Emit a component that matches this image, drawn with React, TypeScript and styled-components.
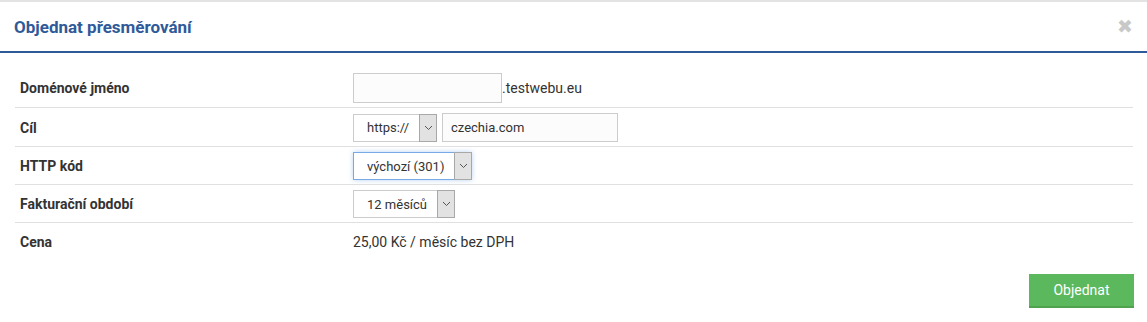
import styled, { createGlobalStyle } from 'styled-components';

const GlobalStyle = createGlobalStyle`
  body {
    margin: 0;
    background: #ffffff;
    font-family: Roboto, "Liberation Sans", Arial, sans-serif;
    color: #333333;
  }
`;

const Modal = styled.div`
  width: 1147px;
  height: 322px;
  box-sizing: border-box;
  border-top: 2px solid #e3e3e3;
  background: #fff;
`;

const Header = styled.div`
  display: flex;
  align-items: center;
  justify-content: space-between;
  height: 49px;
  padding: 0 14px;
  border-bottom: 2px solid #2f5a99;
`;

const Title = styled.h4`
  margin: 0;
  font-size: 17px;
  font-weight: 700;
  color: #2f5a99;
`;

const Close = styled.button`
  border: none;
  background: none;
  padding: 0;
  color: #c8c8c8;
  font-size: 19px;
  font-weight: 700;
  line-height: 1;
  cursor: pointer;
  font-family: "DejaVu Sans", sans-serif;
`;

const Body = styled.div`
  padding: 15px 13px 0 15px;
`;

const Table = styled.table`
  width: 1118px;
  border-collapse: collapse;
  font-size: 14px;
`;

const Row = styled.tr<{ $last?: boolean }>`
  border-bottom: ${p => (p.$last ? 'none' : '1px solid #e0e0e0')};
`;

const Label = styled.td`
  width: 323px;
  padding: 5px 5px 4px;
  font-weight: 700;
  color: #333;
  height: 28px;
`;

const Value = styled.td`
  padding: 5px 5px 4px;
  color: #333;
`;

const Inline = styled.div`
  display: flex;
  align-items: center;
  gap: 5px;
`;

const TextInput = styled.input<{ $w: number; $h: number }>`
  box-sizing: border-box;
  width: ${p => p.$w}px;
  height: ${p => p.$h}px;
  padding: 0 8px;
  border: 1px solid #cccccc;
  background: #fcfcfc;
  font-family: inherit;
  font-size: 13px;
  color: #333;
  outline: none;
`;

const Suffix = styled.span`
  margin-left: -5px;
`;

const SelectBox = styled.div<{ $w: number; $focus?: boolean }>`
  box-sizing: border-box;
  display: flex;
  width: ${p => p.$w}px;
  height: 28px;
  border: 1px solid ${p => (p.$focus ? '#76a9e6' : '#cccccc')};
  box-shadow: ${p => (p.$focus ? '0 0 5px rgba(102, 160, 230, 0.45)' : 'none')};
  background: #fff;
`;

const NativeSelect = styled.select`
  flex: 1;
  min-width: 0;
  appearance: none;
  border: none;
  background: transparent;
  padding: 0 0 0 13px;
  font-family: inherit;
  font-size: 13px;
  color: #333;
  outline: none;
`;

const Arrow = styled.span`
  display: flex;
  align-items: center;
  justify-content: center;
  width: 16px;
  margin: -1px -1px -1px 0;
  background: #e2e2e2;
  border: 1px solid #a8a8a8;
`;

const Footer = styled.div`
  display: flex;
  justify-content: flex-end;
  padding-top: 14px;
`;

const OrderButton = styled.button`
  width: 105px;
  height: 34px;
  border: none;
  border-bottom: 2px solid #4fa34f;
  background: #5cb85c;
  color: #fff;
  font-family: inherit;
  font-size: 14px;
  cursor: pointer;
`;

const Chevron = () => (
  <svg width="9" height="6" viewBox="0 0 9 6">
    <path d="M1 1l3.5 3.5L8 1" fill="none" stroke="#555" strokeWidth="1" />
  </svg>
);

function Select({ width, options, focus }: { width: number; options: string[]; focus?: boolean }) {
  return (
    <SelectBox $w={width} $focus={focus}>
      <NativeSelect defaultValue={options[0]}>
        {options.map(o => (
          <option key={o}>{o}</option>
        ))}
      </NativeSelect>
      <Arrow>
        <Chevron />
      </Arrow>
    </SelectBox>
  );
}

export default function App() {
  return (
    <>
      <GlobalStyle />
      <Modal>
        <Header>
          <Title>Objednat přesměrování</Title>
          <Close aria-label="Zavřít">✖</Close>
        </Header>
        <Body>
          <Table>
            <tbody>
              <Row>
                <Label>Doménové jméno</Label>
                <Value>
                  <Inline>
                    <TextInput $w={149} $h={30} />
                    <Suffix>.testwebu.eu</Suffix>
                  </Inline>
                </Value>
              </Row>
              <Row>
                <Label>Cíl</Label>
                <Value>
                  <Inline>
                    <Select width={84} options={['https://', 'http://']} />
                    <TextInput $w={176} $h={29} defaultValue="czechia.com" />
                  </Inline>
                </Value>
              </Row>
              <Row>
                <Label>HTTP kód</Label>
                <Value>
                  <Select width={119} options={['výchozí (301)', '302']} focus />
                </Value>
              </Row>
              <Row>
                <Label>Fakturační období</Label>
                <Value>
                  <Select width={102} options={['12 měsíců', '24 měsíců']} />
                </Value>
              </Row>
              <Row $last>
                <Label>Cena</Label>
                <Value>25,00 Kč / měsíc bez DPH</Value>
              </Row>
            </tbody>
          </Table>
          <Footer>
            <OrderButton>Objednat</OrderButton>
          </Footer>
        </Body>
      </Modal>
    </>
  );
}
